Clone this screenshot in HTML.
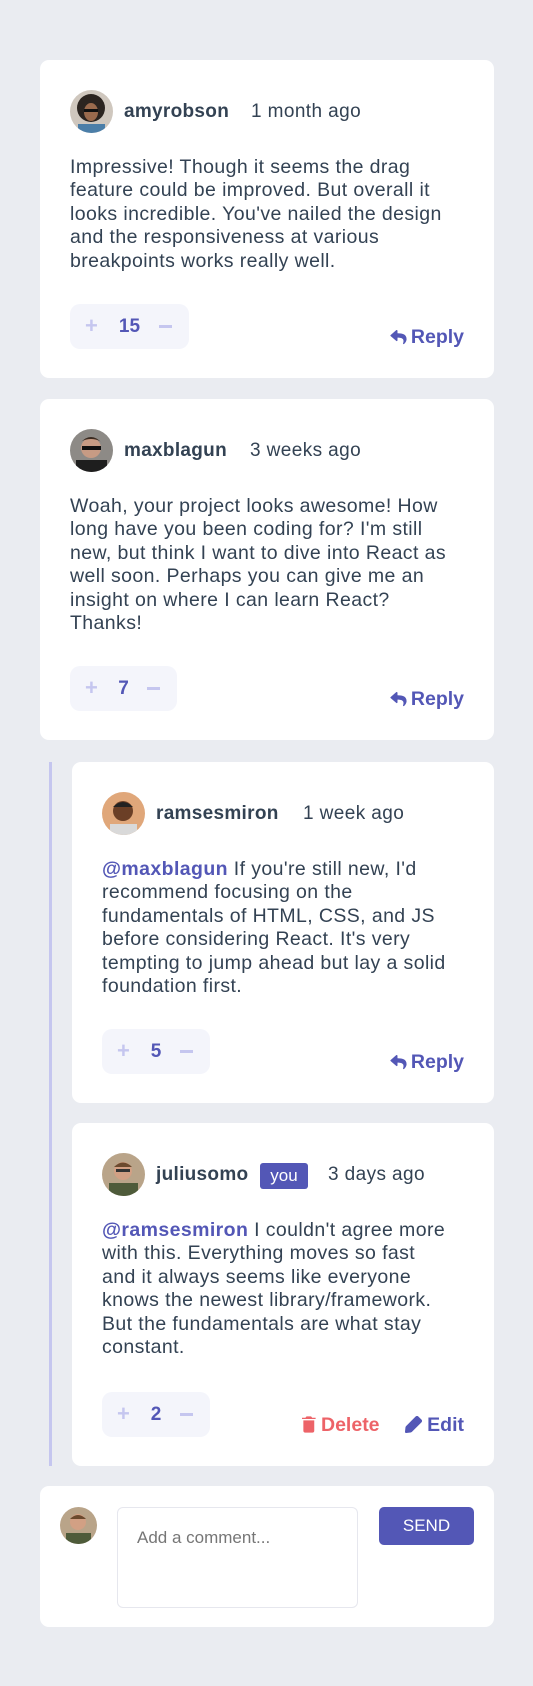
<!DOCTYPE html>
<html><head><meta charset="utf-8"><style>
*{margin:0;padding:0;box-sizing:border-box}
body{width:533px;height:1686px;background:#eaecf1;font-family:"Liberation Sans",sans-serif;color:#334253;position:relative;overflow:hidden}
.card{position:absolute;background:#fff;border-radius:9px}
.av{position:absolute;left:30px;top:30px;width:43px;height:43px;border-radius:50%;overflow:hidden}
.name{position:absolute;left:84px;top:41px;font-weight:bold;font-size:19px;letter-spacing:0.3px;line-height:22px}
.time{position:absolute;top:41px;font-size:19px;letter-spacing:0.4px;line-height:22px;color:#334253}
.txt{position:absolute;left:30px;top:96px;font-size:19.5px;letter-spacing:0.4px;line-height:23.4px;white-space:nowrap;color:#334253}
.at{color:#5357b6;font-weight:bold}
.vote{position:absolute;left:30px;bottom:29px;width:119px;height:45px;background:#f4f5fb;border-radius:10px}
.vote .p{position:absolute;left:15px;top:11px;font-size:22px;line-height:22px;font-weight:bold;color:#c5c6ef}
.vote .n{position:absolute;left:0;width:100%;top:12px;text-align:center;font-size:19px;line-height:21px;font-weight:bold;color:#5357b6}
.vote .m{position:absolute;right:17px;top:21px;width:13px;height:3px;background:#c5c6ef}
.reply{position:absolute;right:30px;bottom:30px;font-size:19.5px;line-height:22px;font-weight:bold;color:#5357b6}
.reply svg{vertical-align:-2px;margin-right:4px}
</style></head><body>

<div class="card" style="left:40px;top:60px;width:454px;height:318px">
 <div class="av"><svg width="43" height="43"><rect width="43" height="43" fill="#cfc7be"/><circle cx="21" cy="18" r="14" fill="#2b2420"/><ellipse cx="21" cy="22" rx="7" ry="9" fill="#9a6a4d"/><rect x="14" y="19" width="14" height="3" fill="#111"/><rect x="8" y="34" width="27" height="12" fill="#4b7ea8"/></svg></div>
 <div class="name">amyrobson</div><div class="time" style="left:211px">1 month ago</div>
 <div class="txt">Impressive! Though it seems the drag<br>feature could be improved. But overall it<br>looks incredible. You've nailed the design<br>and the responsiveness at various<br>breakpoints works really well.</div>
 <div class="vote"><span class="p">+</span><span class="n">15</span><span class="m"></span></div>
 <div class="reply"><svg width="17" height="15" viewBox="0 0 14 13"><path fill="#5357b6" d="M.227 4.316 5.04.16a.657.657 0 0 1 1.085.497v2.189c4.392.05 7.875.93 7.875 5.093 0 1.68-1.082 3.344-2.279 4.214-.373.272-.905-.07-.767-.51 1.240-3.964-.588-5.016-4.829-5.077v2.404c0 .566-.664.86-1.085.496L.227 5.31a.657.657 0 0 1 0-.993Z"/></svg>Reply</div>
</div>

<div class="card" style="left:40px;top:399px;width:454px;height:341px">
 <div class="av"><svg width="43" height="43"><rect width="43" height="43" fill="#8d8a86"/><circle cx="21" cy="19" r="10" fill="#c79b84"/><rect x="12" y="17" width="19" height="4" fill="#111"/><path d="M10 14 Q21 2 32 14 L30 12 Q21 8 12 12Z" fill="#3a2a20"/><rect x="6" y="31" width="31" height="14" fill="#1e1e1e"/></svg></div>
 <div class="name">maxblagun</div><div class="time" style="left:210px">3 weeks ago</div>
 <div class="txt">Woah, your project looks awesome! How<br>long have you been coding for? I'm still<br>new, but think I want to dive into React as<br>well soon. Perhaps you can give me an<br>insight on where I can learn React?<br>Thanks!</div>
 <div class="vote" style="width:107px"><span class="p">+</span><span class="n">7</span><span class="m"></span></div>
 <div class="reply"><svg width="17" height="15" viewBox="0 0 14 13"><path fill="#5357b6" d="M.227 4.316 5.04.16a.657.657 0 0 1 1.085.497v2.189c4.392.05 7.875.93 7.875 5.093 0 1.68-1.082 3.344-2.279 4.214-.373.272-.905-.07-.767-.51 1.240-3.964-.588-5.016-4.829-5.077v2.404c0 .566-.664.86-1.085.496L.227 5.31a.657.657 0 0 1 0-.993Z"/></svg>Reply</div>
</div>

<div style="position:absolute;left:49px;top:762px;width:3px;height:704px;background:#c5c6ef"></div>

<div class="card" style="left:72px;top:762px;width:422px;height:341px">
 <div class="av"><svg width="43" height="43"><rect width="43" height="43" fill="#e0a77a"/><circle cx="21" cy="19" r="10" fill="#6b3f26"/><path d="M11 15 Q21 5 31 15Z" fill="#222"/><rect x="8" y="32" width="27" height="12" fill="#d9d9d9"/></svg></div>
 <div class="name">ramsesmiron</div><div class="time" style="left:231px">1 week ago</div>
 <div class="txt"><span class="at">@maxblagun</span> If you're still new, I'd<br>recommend focusing on the<br>fundamentals of HTML, CSS, and JS<br>before considering React. It's very<br>tempting to jump ahead but lay a solid<br>foundation first.</div>
 <div class="vote" style="width:108px"><span class="p">+</span><span class="n">5</span><span class="m"></span></div>
 <div class="reply"><svg width="17" height="15" viewBox="0 0 14 13"><path fill="#5357b6" d="M.227 4.316 5.04.16a.657.657 0 0 1 1.085.497v2.189c4.392.05 7.875.93 7.875 5.093 0 1.68-1.082 3.344-2.279 4.214-.373.272-.905-.07-.767-.51 1.240-3.964-.588-5.016-4.829-5.077v2.404c0 .566-.664.86-1.085.496L.227 5.31a.657.657 0 0 1 0-.993Z"/></svg>Reply</div>
</div>

<div class="card" style="left:72px;top:1123px;width:422px;height:343px">
 <div class="av"><svg width="43" height="43"><rect width="43" height="43" fill="#b9a489"/><circle cx="21" cy="18" r="9" fill="#d2a084"/><path d="M12 14 Q21 5 30 14Z" fill="#6b4a2e"/><rect x="14" y="16" width="14" height="3" fill="#333"/><rect x="7" y="30" width="29" height="14" fill="#4e5b3a"/></svg></div>
 <div class="name">juliusomo</div>
 <div style="position:absolute;left:188px;top:40px;width:48px;height:26px;background:#5357b6;border-radius:3px;color:#fff;font-size:17px;line-height:25px;text-align:center">you</div>
 <div class="time" style="left:256px">3 days ago</div>
 <div class="txt"><span class="at">@ramsesmiron</span> I couldn't agree more<br>with this. Everything moves so fast<br>and it always seems like everyone<br>knows the newest library/framework.<br>But the fundamentals are what stay<br>constant.</div>
 <div class="vote" style="width:108px"><span class="p">+</span><span class="n">2</span><span class="m"></span></div>
 <div style="position:absolute;left:230px;bottom:30px;font-size:19.5px;line-height:22px;font-weight:bold;color:#ed6368"><svg width="14" height="17" viewBox="0 0 12 14" style="vertical-align:-2px;margin-right:5px"><path fill="#ed6368" d="M1.167 12.448c0 .854.7 1.552 1.555 1.552h6.222c.856 0 1.556-.698 1.556-1.552V3.5H1.167v8.948Zm10.5-11.281H8.75L7.773 0h-3.880l-.976 1.167H0v1.166h11.667V1.167Z"/></svg>Delete</div>
 <div style="position:absolute;right:30px;bottom:30px;font-size:19.5px;line-height:22px;font-weight:bold;color:#5357b6"><svg width="17" height="17" viewBox="0 0 14 14" style="vertical-align:-2px;margin-right:5px"><path fill="#5357b6" d="M13.479 2.872 11.08.474a1.750 1.750 0 0 0-2.327-.06L.879 8.287a1.750 1.750 0 0 0-.5 1.06l-.375 3.648a.875.875 0 0 0 .875.954h.078l3.650-.333c.399-.04.773-.216 1.058-.499l7.875-7.875a1.680 1.680 0 0 0-.061-2.371Z"/></svg>Edit</div>
</div>

<div class="card" style="left:40px;top:1486px;width:454px;height:141px">
 <div style="position:absolute;left:20px;top:21px;width:37px;height:37px;border-radius:50%;overflow:hidden"><svg width="37" height="37"><rect width="37" height="37" fill="#b9a489"/><circle cx="18" cy="15" r="8" fill="#d2a084"/><path d="M10 12 Q18 4 26 12Z" fill="#6b4a2e"/><rect x="6" y="26" width="25" height="12" fill="#4e5b3a"/></svg></div>
 <div style="position:absolute;left:77px;top:21px;width:241px;height:101px;border:1px solid #e6e7ee;border-radius:6px;padding:20px 19px;font-size:17px;color:#767676">Add a comment...</div>
 <div style="position:absolute;left:339px;top:21px;width:95px;height:38px;background:#5357b6;border-radius:5px;color:#fff;font-size:17px;line-height:38px;text-align:center">SEND</div>
</div>

</body></html>
